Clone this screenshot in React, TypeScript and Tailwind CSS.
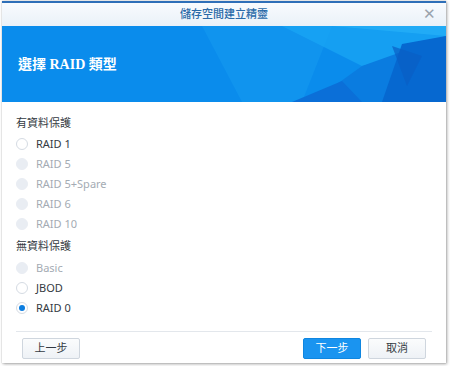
import React from 'react'

const font = { fontFamily: '"Noto Sans", "Noto Sans CJK TC", sans-serif' }

type Opt = { label: string; disabled?: boolean; checked?: boolean }

const protectedOpts: Opt[] = [
  { label: 'RAID 1' },
  { label: 'RAID 5', disabled: true },
  { label: 'RAID 5+Spare', disabled: true },
  { label: 'RAID 6', disabled: true },
  { label: 'RAID 10', disabled: true },
]

const plainOpts: Opt[] = [
  { label: 'Basic', disabled: true },
  { label: 'JBOD' },
  { label: 'RAID 0', checked: true },
]

function Radio({ label, disabled, checked }: Opt) {
  return (
    <div className="flex items-center h-5 gap-2">
      <span
        className={[
          'w-3 h-3 rounded-full flex items-center justify-center border',
          disabled ? 'bg-[#e9edf3] border-[#e9edf3]' : 'bg-white border-[#d5dbe3]',
        ].join(' ')}
      >
        {checked && <span className="w-[6px] h-[6px] rounded-full bg-[#0b7de0]" />}
      </span>
      <span className={['text-[11px]', disabled ? 'text-[#a4abb3]' : 'text-[#333a42]'].join(' ')}>{label}</span>
    </div>
  )
}

function Banner() {
  return (
    <div className="relative h-[76px] bg-[#0a8cec] overflow-hidden">
      <svg className="absolute inset-0" width="444" height="76" viewBox="0 0 444 76" preserveAspectRatio="none">
        <polygon points="200,0 330,0 300,76 240,76" fill="#1499f0" opacity="0.6" />
        <polygon points="280,0 444,0 444,20 360,40" fill="#19a6f5" opacity="0.7" />
        <polygon points="330,0 444,0 444,10" fill="#2ab4f8" opacity="0.6" />
        <polygon points="360,40 444,10 444,76 310,76" fill="#0a7ce0" />
        <polygon points="400,18 444,10 444,76 380,76" fill="#0668d0" />
        <polygon points="290,76 340,55 360,76" fill="#0b6fd8" />
        <polygon points="390,20 420,30 405,60" fill="#0a5ec4" opacity="0.7" />
      </svg>
      <div
        className="relative h-full flex items-center pl-[16px] text-white text-[14px] font-bold"
        style={{ fontFamily: '"Liberation Serif", "Noto Sans CJK TC", serif' }}
      >
        選擇 RAID 類型
      </div>
    </div>
  )
}

function Btn({ children, primary }: { children: React.ReactNode; primary?: boolean }) {
  return (
    <button
      className={[
        'w-[58px] h-[21px] text-[11px] rounded-[2px] border',
        primary
          ? 'bg-[#1a94f0] border-[#0f86e0] text-white'
          : 'bg-gradient-to-b from-[#fbfcfd] to-[#eef2f6] border-[#cfd6de] text-[#333a42]',
      ].join(' ')}
    >
      {children}
    </button>
  )
}

export default function App() {
  return (
    <div className="w-[450px] h-[366px] bg-white pt-[1px] px-[2px]" style={font}>
      <div className="w-[444px] h-[362px] flex flex-col bg-white border-t-2 border-[#2e6fb8] shadow-[1px_1px_3px_rgba(0,0,0,0.35),0_0_1px_rgba(0,0,0,0.25)]">
        {/* Title bar */}
        <div className="relative h-[23px] flex items-center justify-center bg-gradient-to-b from-[#f8fbfe] to-[#eaf1f8]">
          <span className="text-[11px] text-[#2a6aa8] font-medium">儲存空間建立精靈</span>
          <span className="absolute right-[10px] top-[3px] text-[#9aa3ad] text-[15px] leading-none">✕</span>
        </div>

        <Banner />

        {/* Body */}
        <div className="flex-1 flex flex-col px-[14px] pt-[12px]">
          <div className="text-[11px] text-[#333a42] h-[18px] leading-[18px] mb-[2px]">有資料保護</div>
          {protectedOpts.map(o => (
            <Radio key={o.label} {...o} />
          ))}
          <div className="text-[11px] text-[#333a42] h-[18px] leading-[18px] mt-[3px] mb-[3px]">無資料保護</div>
          {plainOpts.map(o => (
            <Radio key={o.label} {...o} />
          ))}
          <div className="mt-[13px] border-t border-[#e3e7ec]" />
          <div className="flex items-center justify-between pt-[6px] pl-[6px] pr-[6px]">
            <Btn>上一步</Btn>
            <div className="flex gap-[7px]">
              <Btn primary>下一步</Btn>
              <Btn>取消</Btn>
            </div>
          </div>
        </div>
      </div>
    </div>
  )
}
